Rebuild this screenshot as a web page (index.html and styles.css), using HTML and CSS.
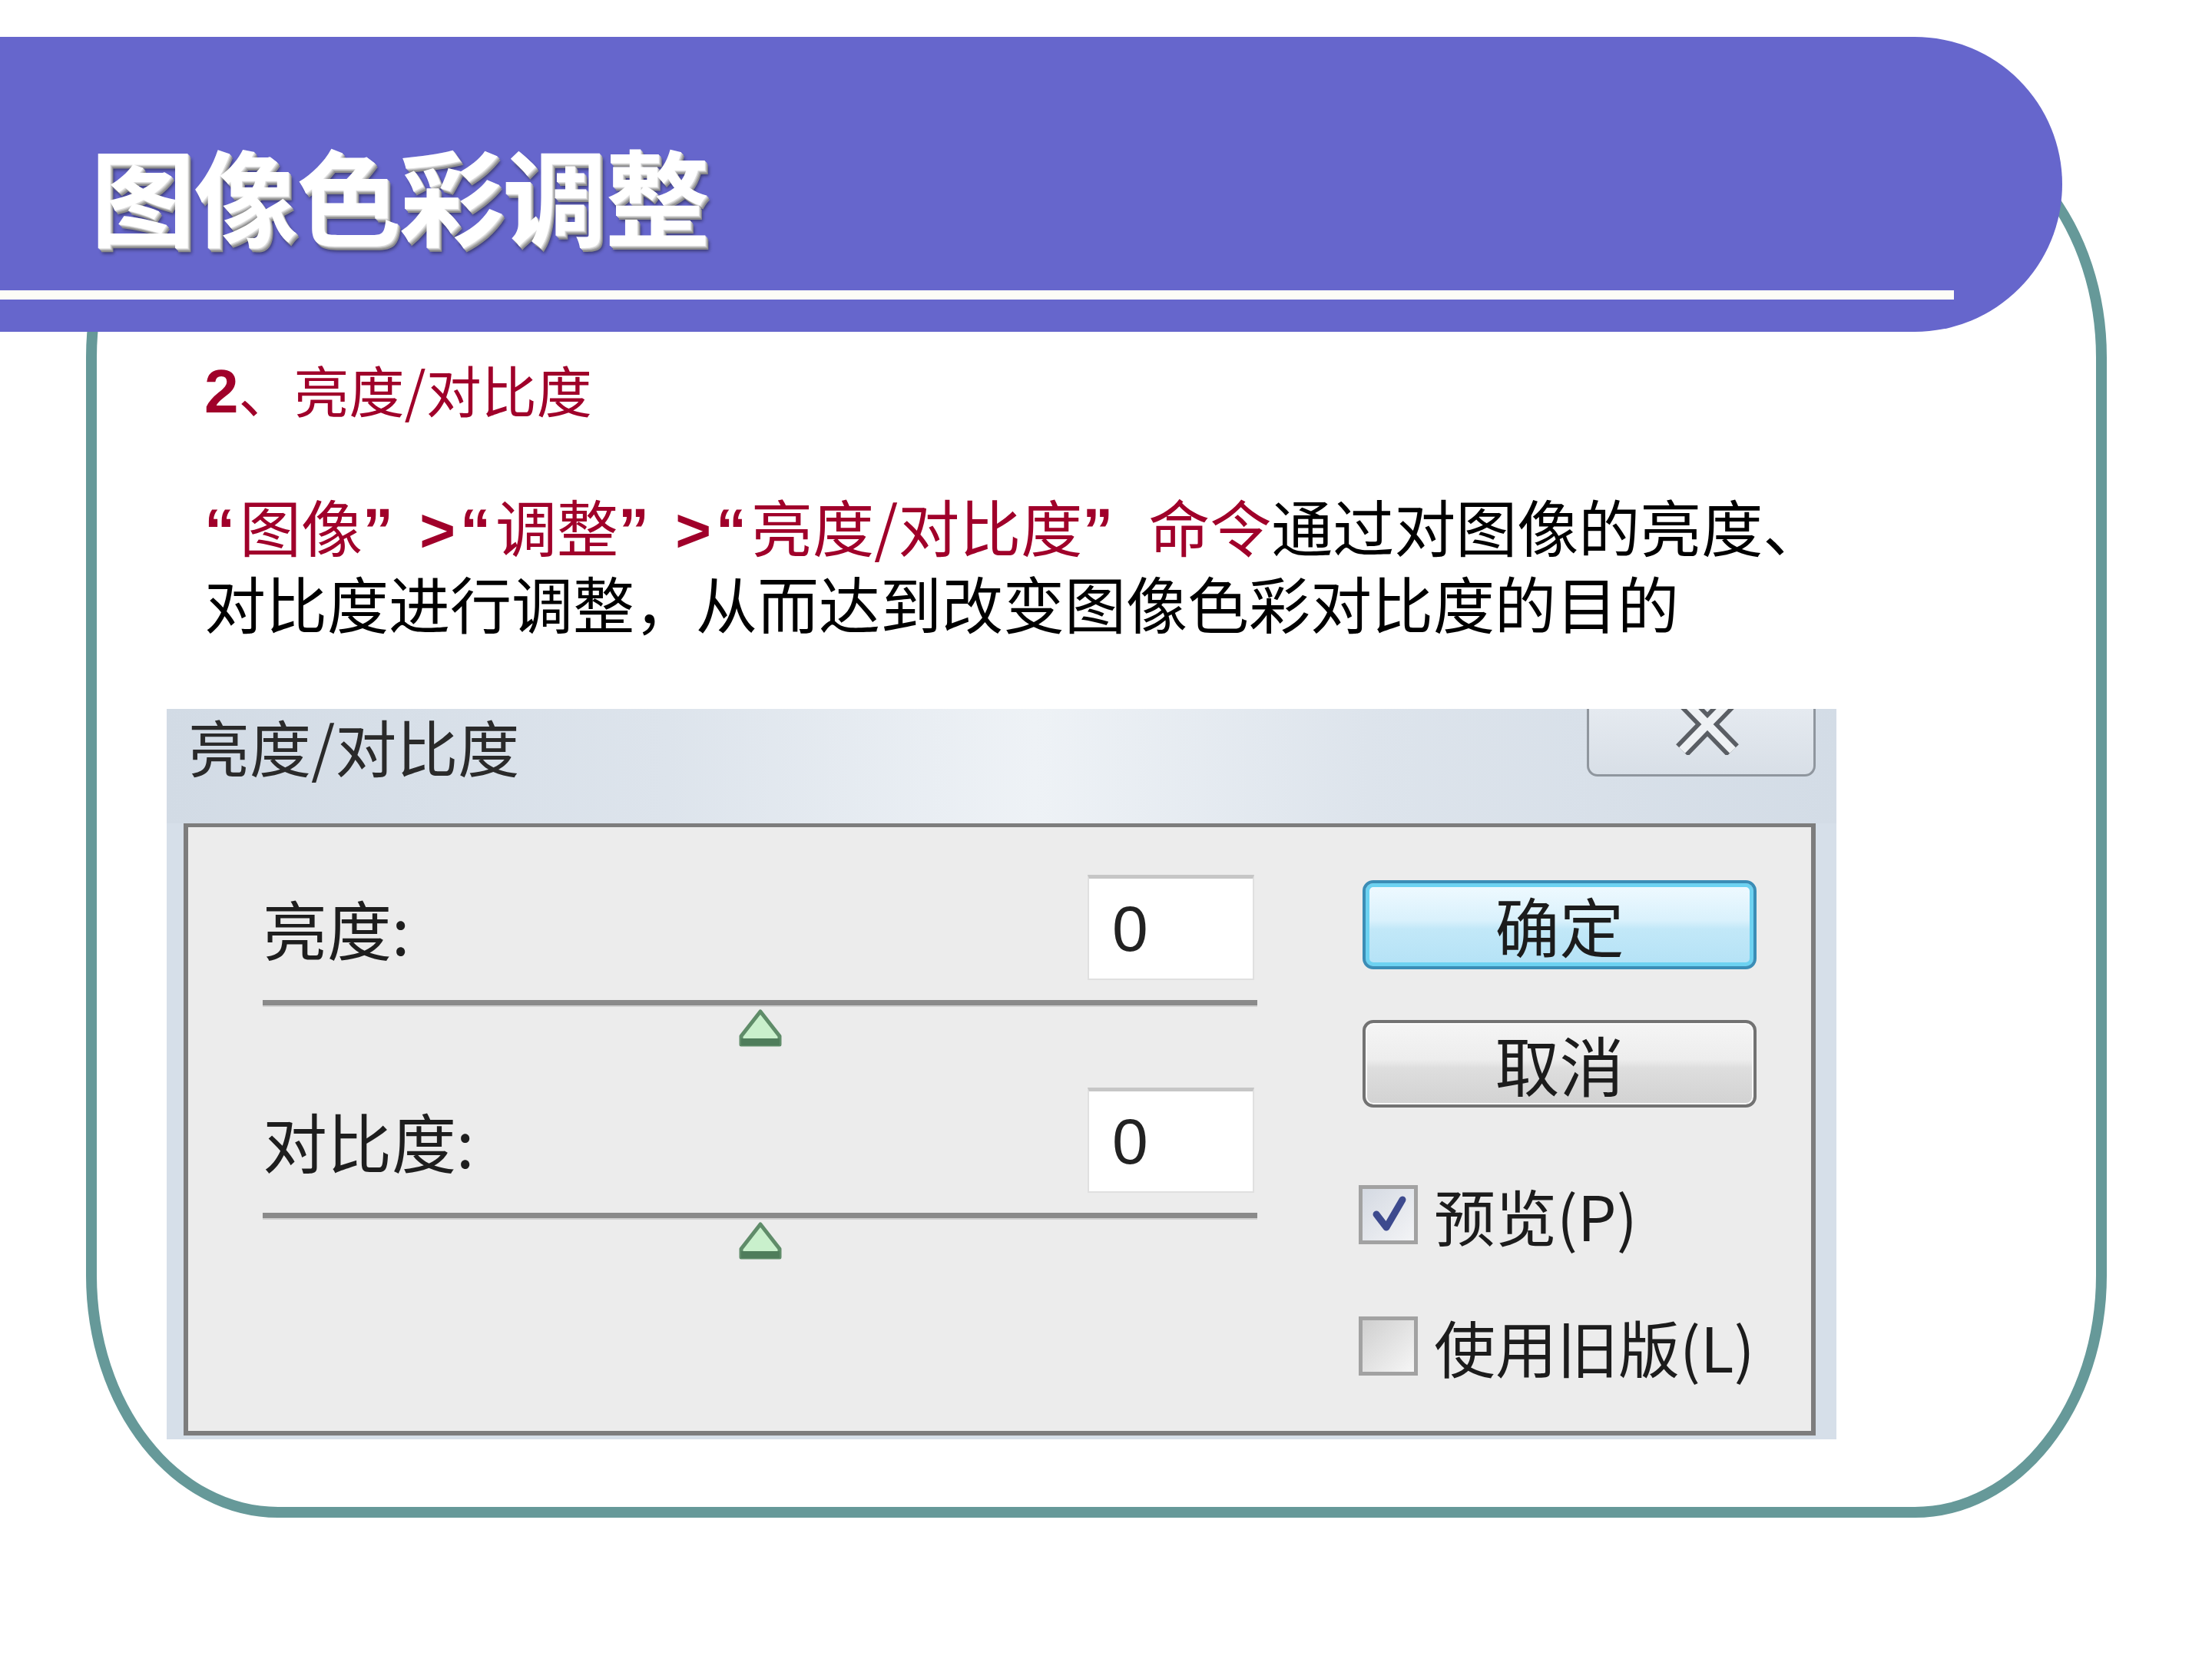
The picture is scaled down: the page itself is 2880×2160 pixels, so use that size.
FILE: index.html
```html
<!DOCTYPE html>
<html lang="zh-CN">
<head>
    <meta charset="UTF-8">
    <title>图像色彩调整</title>
    <link rel="stylesheet" href="styles.css">
</head>
<body>
    <div class="slide">
        <header class="banner">
            <h1 class="banner-title">图像色彩调整</h1>
            <div class="banner-rule"></div>
        </header>

        <main class="frame">
            <h2 class="section-title"><span class="num">2</span>、亮度/对比度</h2>
            <p class="lead"><span class="red"><span class="sym">“</span>图像<span class="sym">” &gt;“</span>调整<span class="sym">” &gt;“</span>亮度/对比度<span class="sym">”</span>&ensp;命令</span>通过对图像的亮度、<br>对比度进行调整，从而达到改变图像色彩对比度的目的</p>

            <div class="dialog">
                <div class="dialog-titlebar">
                    <span class="dialog-title">亮度/对比度</span>
                    <div class="close-btn">
                        <svg width="90" height="60" viewBox="0 0 90 60">
                            <path d="M12 -14 L78 54 M78 -14 L12 54" stroke="#5a5e64" stroke-width="22" fill="none"/>
                            <path d="M12 -14 L78 54 M78 -14 L12 54" stroke="#eef1f4" stroke-width="11" fill="none"/>
                        </svg>
                    </div>
                </div>

                <div class="dialog-panel">
                    <div class="sliders">
                        <div class="field">
                            <div class="field-row">
                                <span class="field-label">亮度:</span>
                                <div class="num-input">0</div>
                            </div>
                            <div class="track"></div>
                            <div class="thumb-row">
                                <svg class="thumb" viewBox="0 0 60 51">
                                    <polygon points="30,4 55,36 55,47 5,47 5,36" fill="#c9f0cc" stroke="#5f8c69" stroke-width="5" stroke-linejoin="round"/>
                                    <rect x="5" y="39" width="50" height="9" fill="#4f7d5b"/>
                                </svg>
                            </div>
                        </div>
                        <div class="field">
                            <div class="field-row">
                                <span class="field-label">对比度:</span>
                                <div class="num-input">0</div>
                            </div>
                            <div class="track"></div>
                            <div class="thumb-row">
                                <svg class="thumb" viewBox="0 0 60 51">
                                    <polygon points="30,4 55,36 55,47 5,47 5,36" fill="#c9f0cc" stroke="#5f8c69" stroke-width="5" stroke-linejoin="round"/>
                                    <rect x="5" y="39" width="50" height="9" fill="#4f7d5b"/>
                                </svg>
                            </div>
                        </div>
                    </div>

                    <div class="actions">
                        <div class="btn btn-primary">确定</div>
                        <div class="btn btn-cancel">取消</div>
                        <div class="check check-preview">
                            <span class="box">
                                <svg width="67" height="67" viewBox="0 0 67 67">
                                    <path d="M18 33 L31 50 L52 14" stroke="#3d4a8e" stroke-width="9" fill="none" stroke-linecap="round" stroke-linejoin="round"/>
                                </svg>
                            </span>
                            预览(P)
                        </div>
                        <div class="check check-legacy">
                            <span class="box"></span>
                            使用旧版(L)
                        </div>
                    </div>
                </div>
            </div>
        </main>
    </div>
</body>
</html>
```

FILE: styles.css
```css
body { margin: 0; background: #fff; }
.slide {
    width: 2880px;
    height: 2160px;
    box-sizing: border-box;
    padding-top: 48px;
    overflow: hidden;
    font-family: "Noto Sans CJK SC", sans-serif;
}

/* purple title band */
.banner {
    position: relative;
    z-index: 1;
    width: 2685px;
    height: 384px;
    box-sizing: border-box;
    padding-top: 136px;
    background: #6666cc;
    border-radius: 0 192px 192px 0;
}
.banner-title {
    margin: 0 0 0 118px;
    font-size: 136px;
    line-height: 136px;
    font-weight: 700;
    letter-spacing: -2px;
    color: #fff;
    text-shadow: 1px 1px 0 #e0e0e0, 2px 2px 0 #c4c4c4, 3px 3px 0 #a8a8a8, 4px 5px 0 #8c8c8c, 5px 7px 4px rgba(0, 0, 0, 0.45);
}
.banner-rule { margin-top: 58px; width: 2544px; height: 12px; background: #fcfcf7; }

/* teal rounded frame */
.frame {
    display: block;
    margin: -282px 0 0 112px;
    width: 2631px;
    height: 1826px;
    box-sizing: border-box;
    border: 14px solid #669999;
    border-radius: 250px / 315px;
    padding: 299px 0 0 91px;
}
.section-title {
    margin: 0 0 0 49px;
    font-size: 72px;
    line-height: 86px;
    font-weight: 400;
    color: #a0002a;
}
.section-title .num { font-family: "Liberation Sans", sans-serif; font-weight: 700; font-size: 80px; }
.lead {
    margin: 84px 0 0 49px;
    font-size: 80px;
    line-height: 93px;
    color: #000;
    white-space: nowrap;
}
.red { color: #a0002a; }
.sym { font-family: "Liberation Sans", sans-serif; font-weight: 700; letter-spacing: 6px; }

/* dialog screenshot */
.dialog {
    margin-top: 93px;
    width: 2174px;
    height: 951px;
    box-sizing: border-box;
    display: flex;
    flex-direction: column;
    background: #d6dfe9;
}
.dialog-titlebar {
    height: 149px;
    flex-shrink: 0;
    display: flex;
    justify-content: space-between;
    align-items: flex-start;
    padding-left: 28px;
    background: linear-gradient(90deg, #d2dbe5 0%, #dde4ec 30%, #eef2f6 52%, #dde4ec 72%, #d3dce6 100%);
}
.dialog-title { font-size: 80px; line-height: 94px; color: #2a2a2a; }
.close-btn {
    width: 298px;
    height: 88px;
    margin-right: 27px;
    box-sizing: border-box;
    border: 3px solid #8f969e;
    border-top: 0;
    border-radius: 0 0 14px 14px;
    background: linear-gradient(#e5eaf0, #d8dfe7);
    display: flex;
    justify-content: center;
    padding-left: 16px;
}

.dialog-panel {
    flex: 1;
    min-height: 0;
    margin: 0 27px 5px 22px;
    border: 6px solid #7d7d7d;
    border-top-width: 5px;
    background: #ececec;
    display: flex;
    gap: 132px;
    padding: 62px 0 0 97px;
}
.sliders { width: 1295px; }
.field + .field { margin-top: 52px; }
.field-row { display: flex; justify-content: space-between; align-items: center; height: 137px; }
.field-label { font-size: 84px; line-height: 100px; color: #1e1e1e; }
.num-input {
    width: 217px;
    height: 137px;
    margin-right: 4px;
    box-sizing: border-box;
    display: flex;
    align-items: center;
    padding-left: 30px;
    background: #fff;
    border: 2px solid #e0e0e0;
    border-top: 5px solid #c6c6c6;
    font-family: "Liberation Sans", sans-serif;
    font-size: 84px;
    color: #222;
}
.track { margin-top: 26px; height: 7px; background: #8a8a8a; box-shadow: 0 2px 0 #d0d0d0; }
.thumb-row { display: flex; justify-content: center; margin-top: 4px; }
.thumb { width: 60px; height: 51px; }

.actions { width: 518px; padding-top: 7px; display: flex; flex-direction: column; }
.btn {
    margin-left: 5px;
    width: 513px;
    height: 116px;
    box-sizing: border-box;
    border-radius: 14px;
    display: flex;
    justify-content: center;
    align-items: center;
    font-size: 84px;
    line-height: 100px;
    color: #1c1c1c;
}
.btn-primary {
    border: 4px solid #3b8db6;
    box-shadow: inset 0 0 0 5px #6dd2f1;
    background: linear-gradient(#f0faff 0%, #d9f1fc 45%, #c2e8f8 55%, #b4e2f6 100%);
}
.btn-cancel {
    margin-top: 66px;
    height: 114px;
    border: 4px solid #727272;
    box-shadow: inset 0 0 0 2px #fafafa;
    background: linear-gradient(#f5f5f5 0%, #ededed 45%, #dedede 55%, #d2d2d2 100%);
}
.check {
    display: flex;
    align-items: center;
    gap: 21px;
    height: 77px;
    font-size: 80px;
    line-height: 77px;
    color: #1c1c1c;
    white-space: nowrap;
}
.check-preview { margin-top: 101px; }
.check-legacy { margin-top: 94px; }
.box {
    flex-shrink: 0;
    width: 77px;
    height: 77px;
    box-sizing: border-box;
    border: 5px solid #a2a2a2;
    background: linear-gradient(135deg, #d4d9e2, #f3f4f6);
    display: flex;
}
.check-legacy .box { background: linear-gradient(135deg, #cfcfcf, #f6f6f6); }
```
